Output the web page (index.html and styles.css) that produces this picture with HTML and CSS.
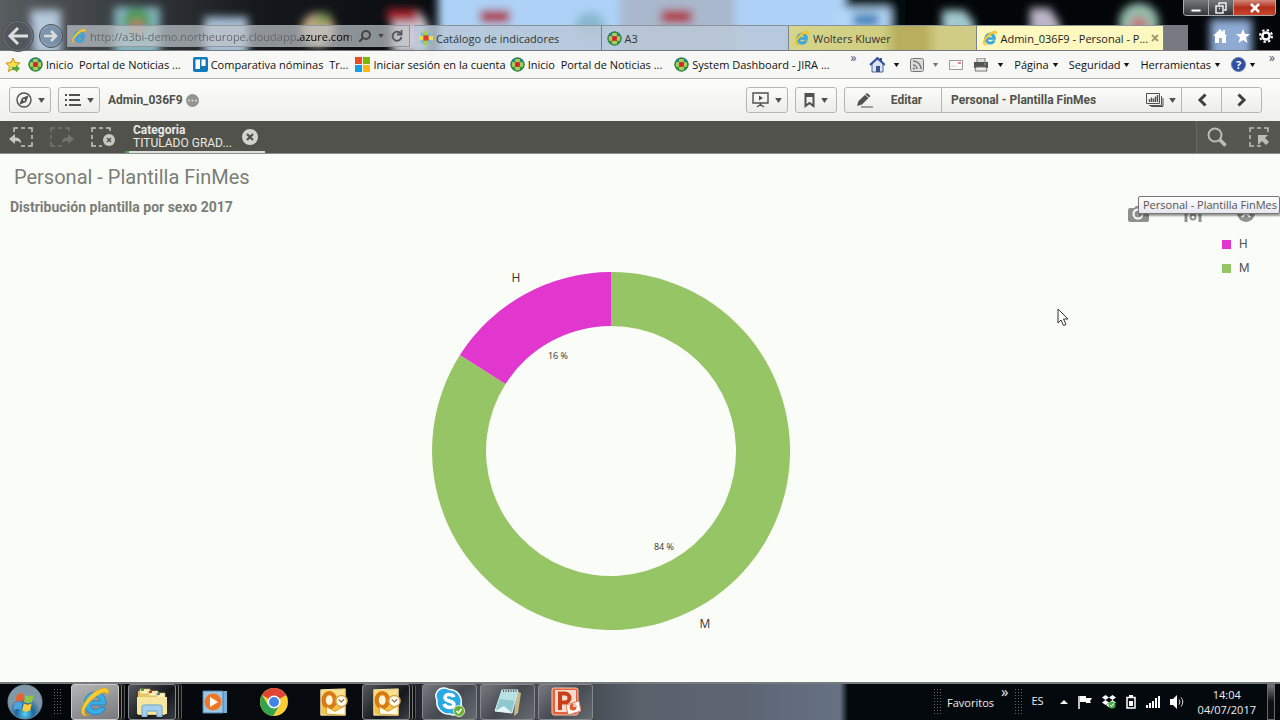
FILE: index.html
```html
<!DOCTYPE html>
<html lang="es">
<head>
  <meta charset="UTF-8" />
  <title>Admin_036F9 - Personal - Plantilla FinMes</title>
  <link rel="stylesheet" href="styles.css">
</head>
<body>

<svg class="sprite" aria-hidden="true">
  <symbol id="ie" viewBox="0 0 32 32">
    <path d="M27 19H11.500c.3 3 2.300 4.700 5 4.700 2 0 3.500-.9 4.300-2.400h5.600C25 26 21.400 28.500 16.500 28.500 10 28.500 5.500 24 5.500 17.200 5.500 10.500 10 6 16.400 6 23.500 6 27.500 11 27 19zM11.600 15H21c-.3-2.700-2-4.300-4.600-4.300-2.500 0-4.300 1.600-4.800 4.300z" fill="#39aee6" stroke="#1c7dbd" stroke-width=".8"/>
    <path d="M4 29C-1 25 7 11 17 5c6-3.600 12-4.500 12.500-.5.200 1.700-.4 3.500-1.300 5 .2-3.500-2.500-4-7-1.600C12 12.500 3 23.500 6 28c1 1.400 3 1 5 0-2.500 2-5.500 2.300-7 1z" fill="#f7cb2d" stroke="#d19a12" stroke-width=".5"/>
  </symbol>
  <symbol id="portal" viewBox="0 0 16 16">
    <circle cx="8" cy="8" r="7.500" fill="#3c9b3c"/>
    <circle cx="8" cy="8" r="7" fill="none" stroke="#2b6f52"/>
    <path d="M5.500 2h5v3.500H14v5h-3.500V14h-5v-3.500H2v-5h3.500z" fill="#a5d05a"/>
    <path d="M2.500 3 5 1.300v3.500H1.500zM11 1.300 13.500 3l1 1.800H11z" fill="#2b77a0"/>
    <rect x="5.500" y="5.500" width="5" height="5" fill="#d4232d"/>
  </symbol>
  <symbol id="catalog" viewBox="0 0 16 16">
    <path d="M5.500 0h5v16h-5z" fill="#a6cf4c"/>
    <path d="M0 5.500h16v5H0z" fill="#e6dd5c"/>
    <path d="M2 2h3.500v3.500H2zM10.500 2H14v3.500h-3.500zM2 10.500h3.500V14H2zM10.500 10.500H14V14h-3.500z" fill="#77b9d8"/>
    <rect x="5" y="5" width="6" height="6" fill="#dc3c2c"/>
  </symbol>
  <symbol id="caret" viewBox="0 0 8 6"><path d="M0 0h8L4 6z" fill="currentColor"/></symbol>
  <symbol id="outlook" viewBox="0 0 32 32">
    <path d="M3 3 29 2v28H3z" fill="#f3c24c" stroke="#fff0c0"/>
    <path d="M4 4 28 3v10L4 18z" fill="#fbe190"/>
    <ellipse cx="12" cy="14" rx="6" ry="7.500" fill="#fff6d8" stroke="#d97a12" stroke-width="4.500"/>
    <path d="M9 29V21l9 5 11-6v10z" fill="#fffbe8" stroke="#dba12c"/>
    <circle cx="25" cy="15" r="6" fill="#fffdf3" stroke="#d9a640" stroke-width="1.500"/>
    <path d="M22 13.500l3 2.500 3-3" fill="none" stroke="#8b6a2b" stroke-width="1.300"/>
  </symbol>
  <symbol id="close" viewBox="0 0 16 16">
    <circle cx="8" cy="8" r="8" fill="#d4d4cf"/>
    <path d="m5 5 6 6m0-6-6 6" stroke="#51524b" stroke-width="2.200"/>
  </symbol>
</svg>

<header class="browser">
  <svg class="wallpaper" viewBox="0 0 1280 50" preserveAspectRatio="none" aria-hidden="true">
    <defs>
      <filter id="soft" x="-10%" y="-60%" width="120%" height="220%"><feGaussianBlur stdDeviation="4"/></filter>
      <linearGradient id="night"><stop offset="0" stop-color="#585d60"/><stop offset=".2" stop-color="#15191d"/><stop offset=".4" stop-color="#030609"/></linearGradient>
    </defs>
    <rect width="1280" height="50" fill="url(#night)"/>
    <g filter="url(#soft)">
      <path d="M30 10h31v45H34z" fill="#b6c8dc"/>
      <rect x="114" y="7" width="46" height="50" fill="#84b6c0"/>
      <circle cx="137" cy="22" r="14" fill="#489b56"/>
      <circle cx="137" cy="27" r="7" fill="#c67870"/>
      <rect x="204" y="17" width="44" height="40" fill="#a9bfd6"/>
      <circle cx="318" cy="30" r="17" fill="#c4a983"/>
      <path d="m312 22 18-12-4 14z" fill="#4e9b3d"/>
      <path d="M392 12h28l8 12v30h-36z" fill="#cfc9d4"/>
      <rect x="387" y="9" width="31" height="13" fill="#a9202f"/>
      <rect x="438" y="-10" width="407" height="70" fill="#aed2f7"/>
      <rect x="620" y="-10" width="115" height="70" fill="#a9b8cc"/>
      <ellipse cx="590" cy="26" rx="15" ry="14" fill="#88b8cf"/>
      <rect x="480" y="10" width="30" height="13" fill="#ad303d"/>
      <rect x="661" y="10" width="31" height="13" fill="#ad303d"/>
      <path d="M845-8h60v70h-60z" fill="#05090d"/>
      <rect x="838" y="8" width="52" height="50" fill="#b4d8f8"/>
      <rect x="853" y="14" width="26" height="12" fill="#347db6"/>
      <path d="M942 10h22l10 12v34h-32z" fill="#a2c9cf"/>
      <path d="M1030 8h20l10 16v30h-30z" fill="#bbb5c7"/>
      <circle cx="1139" cy="23" r="20" fill="#94bdac"/>
      <circle cx="1139" cy="25" r="8" fill="#c76e73"/>
      <rect x="1210" y="19" width="42" height="40" fill="#8fabd4"/>
    </g>
  </svg>

  <div class="window-controls">
    <button aria-label="Minimizar"><svg width="12" height="10"><path d="M1 6h10v3H1z" fill="#fff" stroke="#555"/></svg></button>
    <button aria-label="Restaurar"><svg width="12" height="12" fill="none" stroke="#eee" stroke-width="1.500"><path d="M4 3V1h7v7H9"/><path d="M1 4h7v7H1z"/><path d="M4 6.500h1"/></svg></button>
    <button class="quit" aria-label="Cerrar"><svg width="12" height="10"><path d="m2 1 8 8m0-8L2 9" stroke="#fff" stroke-width="2.500"/></svg></button>
  </div>

  <div class="nav-row">
    <button class="nav-back" aria-label="Atrás"><svg width="22" height="20" fill="none" stroke="#ddd" stroke-width="3"><path d="M21 10H3m8-8-8 8 8 8"/></svg></button>
    <button class="nav-forward" aria-label="Adelante"><svg width="14" height="14" fill="none" stroke="#ddd" stroke-width="2.500"><path d="M0 7h12M7 2l5 5-5 5"/></svg></button>
    <div class="address">
      <svg width="16" height="16"><use href="#ie"/></svg>
      <input type="text" aria-label="Dirección" value="http://a3bi-demo.northeurope.cloudapp.azure.com/sense">
      <button aria-label="Buscar"><svg width="12" height="12" fill="none" stroke="#444" stroke-width="2"><circle cx="7" cy="5" r="4"/><path d="m4 8-4 4"/></svg></button>
      <button aria-label="Historial"><svg width="6" height="4" color="#444"><use href="#caret"/></svg></button>
      <button aria-label="Actualizar"><svg width="12" height="12" fill="none" stroke="#555" stroke-width="1.800"><path d="M10 4a4.500 4.500 0 1 0 .5 3"/><path d="M10.500 0v4.500H6"/></svg></button>
    </div>
    <nav class="tabs">
      <a class="tab" href="#"><svg width="14" height="14"><use href="#catalog"/></svg><span>Catálogo de indicadores</span></a>
      <a class="tab" href="#"><svg width="15" height="15"><use href="#portal"/></svg><span>A3</span></a>
      <a class="tab yellow" href="#"><svg width="16" height="16"><use href="#ie"/></svg><span>Wolters Kluwer</span></a>
      <a class="tab active" href="#"><svg width="16" height="16"><use href="#ie"/></svg><span>Admin_036F9 - Personal - P...</span><svg class="tab-close" width="8" height="8"><path d="m1 1 6 6m0-6L1 7" stroke="#a29b72" stroke-width="2"/></svg></a>
      <button class="new-tab" aria-label="Nueva pestaña"></button>
    </nav>
    <div class="browser-tools">
      <button aria-label="Inicio"><svg width="14" height="14"><path d="M7 0 0 7h2v7h4V9h3v5h4V7h1l-2-2V1h-2v2z" fill="#fff"/></svg></button>
      <button aria-label="Favoritos"><svg width="14" height="14"><path d="m7 0 2 5h5l-4 3.500L11.500 14 7 11l-4.500 3L4 8.500 0 5h5z" fill="#fff"/></svg></button>
      <button aria-label="Opciones"><svg width="14" height="14" fill="none" stroke="#fff"><circle cx="7" cy="7" r="3.600" stroke-width="2.500"/><circle cx="7" cy="7" r="6" stroke-width="2" stroke-dasharray="2.400 2.310"/></svg></button>
    </div>
  </div>
</header>

<div class="favorites">
  <nav class="fav-links">
    <a href="#" aria-label="Agregar a favoritos"><svg width="16" height="16"><path d="m8 1 2 4.500 5 .5-4 3.500 1 5-4-2.500-4.500 2.500 1-5L1 6l5-.5z" fill="#fbdc4c" stroke="#c89512"/><path d="M7 10h4V8l4 3.500-4 3.500v-2H7z" fill="#53a83c"/></svg></a>
    <a class="near" href="#"><svg width="15" height="15"><use href="#portal"/></svg>Inicio&nbsp; Portal de Noticias ...</a>
    <a class="apart" href="#"><svg width="15" height="15"><rect width="15" height="15" rx="2" fill="#1379bd"/><path d="M2.500 2.500H7V12H2.500zM8.500 2.500h4V9h-4z" fill="#fff"/></svg>Comparativa nóminas&nbsp; Tr...</a>
    <a class="near" href="#"><svg width="15" height="15"><path d="M0 0h7v7H0z" fill="#ef4a24"/><path d="M8 0h7v7H8z" fill="#7db700"/><path d="M0 8h7v7H0z" fill="#149fe3"/><path d="M8 8h7v7H8z" fill="#fab813"/></svg>Iniciar sesión en la cuenta</a>
    <a href="#"><svg width="15" height="15"><use href="#portal"/></svg>Inicio&nbsp; Portal de Noticias ...</a>
    <a class="apart" href="#"><svg width="15" height="15"><use href="#portal"/></svg>System Dashboard - JIRA ...</a>
  </nav>
  <span class="more">»</span>
  <div class="commands">
    <button class="pic" aria-label="Página principal"><svg width="16" height="16"><path d="M3 7v8h11V7L8.500 2z" fill="#dce3f3" stroke="#5265a0"/><path d="m1 8 7.500-7L16 8M12 1v4" fill="none" stroke="#354d98" stroke-width="2"/><path d="M7 9h4v6H7z" fill="#3e548f"/></svg><svg width="7" height="4"><use href="#caret"/></svg></button>
    <button class="pic muted" aria-label="Fuentes"><svg width="14" height="14" fill="none" stroke="#777"><rect x=".5" y=".5" width="13" height="13" rx="2" fill="#ddd"/><path d="M3 3a8 8 0 0 1 8 8M3 7a4 4 0 0 1 4 4" stroke-width="1.500"/><circle cx="4" cy="10.500" r=".8"/></svg><svg width="7" height="4"><use href="#caret"/></svg></button>
    <button aria-label="Leer correo"><svg width="14" height="10"><path d="M.5.5h13v9H.5z" fill="#fafafa" stroke="#999"/><path d="M9 2h3v2H9z" fill="#d88"/><path d="M2 6h5" stroke="#ccc"/></svg></button>
    <button class="pic" aria-label="Imprimir"><svg width="16" height="14"><path d="M4 0h8v5H4z" fill="#ddd" stroke="#777"/><path d="M1 4h14v6H1z" fill="#555"/><path d="M3 9h10l1 4H2z" fill="#eee" stroke="#777"/><path d="M11 6h2" stroke="#8d8"/></svg><svg width="7" height="4"><use href="#caret"/></svg></button>
    <button>Página<svg width="7" height="4"><use href="#caret"/></svg></button>
    <button>Seguridad<svg width="7" height="4"><use href="#caret"/></svg></button>
    <button>Herramientas<svg width="7" height="4"><use href="#caret"/></svg></button>
    <button class="help" aria-label="Ayuda"><b>?</b><svg width="7" height="4"><use href="#caret"/></svg></button>
  </div>
  <span class="more">»</span>
</div>

<div class="app-bar">
  <button class="btn" aria-label="Navegación"><svg width="16" height="16" fill="none" stroke="#51524b" stroke-width="1.400"><circle cx="8" cy="8" r="7"/><path d="m11.500 4.500-2 5-5 2 2-5z" fill="#51524b"/><circle cx="8" cy="8" r="1" fill="#fff" stroke="none"/></svg><svg width="7" height="5"><use href="#caret"/></svg></button>
  <button class="btn" aria-label="Menú"><svg width="16" height="12" stroke="#51524b" stroke-width="2"><path d="M0 1h2M4 1h11M0 6h2M4 6h11M0 11h2M4 11h12"/></svg><svg width="7" height="5"><use href="#caret"/></svg></button>
  <span class="app-name">Admin_036F9</span>
  <svg width="13" height="13"><circle cx="6.500" cy="6.500" r="6.500" fill="#93938f"/><path d="M2 6.500h9" stroke="#ddd" stroke-width="1.500" stroke-dasharray="2 1.500"/></svg>
  <div class="app-actions">
    <button class="btn" aria-label="Historias"><svg width="17" height="16" fill="none" stroke="#51524b" stroke-width="1.400"><path d="M1 1h15v10H1zM8.500 11v3M5 15l3.500-2.500L12 15"/><path d="m7 3.500 4 2.500-4 2.500z" fill="#51524b" stroke="none"/></svg><svg width="7" height="5"><use href="#caret"/></svg></button>
    <button class="btn" aria-label="Marcadores"><svg width="11" height="15"><path d="M1.500 1h8v12l-4-3-4 3z" fill="none" stroke="#51524b" stroke-width="2"/><path d="M1 0h9v4H1z" fill="#51524b"/></svg><svg width="7" height="5"><use href="#caret"/></svg></button>
    <div class="sheet-group">
      <button class="edit"><svg width="17" height="16"><path d="m1 14 1.500-5L11 1l3.500 3L6 12.500z" fill="#51524b"/><path d="M9 2.500 13 6" stroke="#f5f6f2"/><path d="M5 15h12" stroke="#51524b"/></svg>Editar</button>
      <button class="sheet-name">Personal - Plantilla FinMes<svg width="18" height="14" fill="none" stroke="#51524b"><path d="M.5.500h13v10H.5z"/><path d="M3 12.500h12.500V3M5 13.500h12V5"/><path d="M3.500 9V6M5.500 9V4.500M7.500 9V5.500M9.500 9V3.500M11.500 9V2" stroke-width="1.400"/></svg><svg width="7" height="5"><use href="#caret"/></svg></button>
      <button class="arrow" aria-label="Hoja anterior"><svg width="10" height="14" fill="none" stroke="#40413b" stroke-width="3"><path d="M8.500 1.500 3 7l5.500 5.500"/></svg></button>
      <button class="arrow" aria-label="Hoja siguiente"><svg width="10" height="14" fill="none" stroke="#40413b" stroke-width="3"><path d="M1.500 1.500 7 7l-5.500 5.500"/></svg></button>
    </div>
  </div>
</div>

<div class="selections">
  <div class="selection-tools">
    <button aria-label="Paso atrás"><svg width="24" height="20" fill="none" stroke="#c8c8c3" stroke-width="1.500"><path d="M5 5V1h4M12 1h4M19 1h4v4M23 8v4M23 15v4h-4M16 19h-4"/><path d="m0 12 6-5v3.500c4 0 6 2 6 6-1.500-2-3-2.500-6-2.500V17z" fill="#c8c8c3" stroke="none"/></svg></button>
    <button class="dim" aria-label="Paso adelante"><svg width="24" height="20" fill="none" stroke="#c8c8c3" stroke-width="1.500"><path d="M1 5V1h4M8 1h4M15 1h4v3M1 8v4M1 15v4h4M8 19h4"/><path d="m24 12-6-5v3.500c-4 0-6 2-6 6 1.500-2 3-2.500 6-2.500V17z" fill="#c8c8c3" stroke="none"/></svg></button>
    <button aria-label="Borrar selecciones"><svg width="24" height="20" fill="none" stroke="#c8c8c3" stroke-width="1.500"><path d="M1 5V1h4M8 1h4M15 1h4v3M1 8v4M1 15v4h4M8 19h3"/><circle cx="18" cy="13" r="6" fill="#c8c8c3" stroke="none"/><path d="m16 11 4 4m0-4-4 4" stroke="#51524b"/></svg></button>
  </div>
  <div class="selection">
    <div class="selection-text"><b>Categoria</b><span>TITULADO GRAD...</span></div>
    <button aria-label="Borrar Categoria"><svg width="16" height="16"><use href="#close"/></svg></button>
  </div>
  <div class="selection-search">
    <button aria-label="Buscar"><svg width="20" height="20" fill="none" stroke="#bdbdb8"><circle cx="8" cy="8" r="6.500" stroke-width="2"/><path d="m12.500 12.500 6 6" stroke-width="3.500"/></svg></button>
    <button aria-label="Herramienta de selecciones"><svg width="20" height="20" fill="none" stroke="#bdbdb8" stroke-width="1.500"><path d="M1 5V1h4M8 1h4M15 1h4v4M1 8v4M1 15v4h4M8 19h4"/><path d="M9 8h10l-3 3 4 4-3 3-4-4-4 4z" fill="#bdbdb8" stroke="none"/></svg></button>
  </div>
</div>

<main>
  <h1>Personal - Plantilla FinMes</h1>
  <h2>Distribución plantilla por sexo 2017</h2>

  <div class="object-tools">
    <button aria-label="Instantánea"><svg width="22" height="16"><path d="M3 2h4l2-2h6l2 2h3q2 0 2 2v10q0 2-2 2H3q-2 0-2-2V4q0-2 2-2z" fill="#8f908b"/><circle cx="11" cy="8" r="4.500" fill="none" stroke="#fff" stroke-width="2"/></svg></button>
    <button aria-label="Exploración"><svg width="18" height="18" fill="none" stroke="#8f908b" stroke-width="3"><path d="M2 0v18M16 0v18"/><path d="M9 0v8" stroke-width="2"/><circle cx="9" cy="13" r="2.500" stroke-width="2"/></svg></button>
    <button aria-label="Pantalla completa"><svg width="18" height="18"><circle cx="9" cy="9" r="9" fill="#8f908b"/><path d="m5 5 8 8m0-8-8 8" stroke="#fff" stroke-width="2"/></svg></button>
  </div>
  <div class="tooltip" role="tooltip">Personal - Plantilla FinMes</div>

  <div class="chart">
    <svg class="donut" viewBox="0 0 400 392" role="img" aria-label="H 16 %, M 84 %">
      <path d="M200 15A179 179 0 1 1 48.900 98.100L94.500 127A125 125 0 1 0 200 69z" fill="#96c566"/>
      <path d="M48.900 98.100A179 179 0 0 1 200 15v54a125 125 0 0 0-105.500 58z" fill="#e137cf"/>
      <text x="105" y="25">H</text>
      <text x="294" y="371">M</text>
      <text class="share" x="147" y="102">16 %</text>
      <text class="share" x="253" y="293">84 %</text>
    </svg>
    <ul class="legend">
      <li><i class="key-h"></i>H</li>
      <li><i class="key-m"></i>M</li>
    </ul>
  </div>

  <svg class="pointer" width="12" height="19" aria-hidden="true"><path d="M1 1v14l3-3 2.500 5.500 2.500-1L6.500 11H11z" fill="#fff" stroke="#333"/></svg>
</main>

<footer class="taskbar">
  <button class="start" aria-label="Inicio">
    <svg width="36" height="36" viewBox="0 0 36 36">
      <defs><radialGradient id="orb" cx=".5" cy=".85"><stop offset="0" stop-color="#5bd3f5"/><stop offset=".5" stop-color="#1c679f"/><stop offset="1" stop-color="#8097a8"/></radialGradient></defs>
      <circle cx="18" cy="18" r="17" fill="url(#orb)" stroke="#7693a5"/>
      <path d="M10 11c3-2 5-2 7-.5l-1.500 7C13 16 11 16 8.500 17.500z" fill="#ee6128"/>
      <path d="M18.500 11c3 1.500 5 1.500 8 0L25 18c-3 1.500-5 1.500-8 0z" fill="#8fc83e"/>
      <path d="M8 19c3-1.500 5-1.500 7.500 0L14 26c-2.500-1.500-4.500-1.500-7.500 0z" fill="#4ba4e3"/>
      <path d="M16.700 19.500c3 1.500 5 1.500 8 0l-1.500 7c-3 1.500-5 1.500-8 0z" fill="#fccb37"/>
    </svg>
  </button>
  <span class="grip"></span>
  <button class="task stacked lit" aria-label="Internet Explorer"><svg width="32" height="32"><use href="#ie"/></svg></button>
  <button class="task stacked" aria-label="Explorador de archivos">
    <svg width="32" height="30" viewBox="0 0 32 30"><path d="M2 4h9l2 3h16v21H2z" fill="#e9c863"/><path d="M4 2h10v5H4zM12 4h10v5H12zM20 6h9v5h-9z" fill="#faf0bd" stroke="#d5b455" stroke-width=".6"/><path d="M5 2h3v2H5z" fill="#3fa648"/><path d="M13 4h3v2h-3z" fill="#cb3c33"/><path d="M21 6h3v2h-3z" fill="#3b86c9"/><path d="M1 10h30v17H1z" fill="#f8e5a0"/><path d="M6 30V20q0-2 2-2h16q2 0 2 2v10h-5v-6h-10v6z" fill="#a4d1ee" stroke="#6aa5cf"/></svg>
  </button>
  <button class="task plain" aria-label="Reproductor multimedia">
    <svg width="26" height="26"><path d="M5 2h20v22H5z" fill="#77aed6"/><path d="M1 2h20v22H1z" fill="#9ec7e4" stroke="#4d81ad"/><circle cx="11" cy="13" r="8.500" fill="#ef7625"/><path d="m8 8 8 5-8 5z" fill="#fff"/></svg>
  </button>
  <button class="task plain" aria-label="Chrome">
    <svg width="28" height="28" viewBox="0 0 28 28"><circle cx="14" cy="14" r="14" fill="#f9cd35"/><path d="M14 14 2 7a14 14 0 0 1 24.200 0z" fill="#e04535"/><path d="M2 7a14 14 0 0 0 11 21l6-10-5 2-6-3z" fill="#32a350"/><circle cx="14" cy="14" r="6.500" fill="#fff"/><circle cx="14" cy="14" r="5" fill="#4384e8"/></svg>
  </button>
  <button class="task plain" aria-label="Outlook"><svg width="30" height="30"><use href="#outlook"/></svg></button>
  <button class="task stacked" aria-label="Outlook, ventanas abiertas"><svg width="30" height="30"><use href="#outlook"/></svg></button>
  <button class="task open" aria-label="Skype Empresarial">
    <svg width="30" height="30" viewBox="0 0 30 30"><path d="M9 1a8 8 0 0 1 5 1.500A12 12 0 0 1 26 17a8 8 0 0 1-11 10A12 12 0 0 1 2 13 8 8 0 0 1 9 1z" fill="#28a9e5" stroke="#fff" stroke-width="1.500"/><path d="M19 10c-1-3-9-4-9 .5 0 5 9 2.500 9 7 0 4-8 4-10-.5" fill="none" stroke="#fff" stroke-width="3.500"/><circle cx="24" cy="24" r="5.500" fill="#6aae2e" stroke="#dfead4"/><path d="m21.500 24 2 2 3-4" fill="none" stroke="#fff" stroke-width="1.500"/></svg>
  </button>
  <button class="task open" aria-label="Bloc de notas">
    <svg width="30" height="28"><path d="m23 3 5 2-3 20-4 3z" fill="#c9b98a"/><path d="M9 2h16l-6 23-17-2z" fill="#8fc8cf" stroke="#dff2f4"/><path d="M9 2h16l-3 11-15-2z" fill="#b9e0e4"/><path d="M10 3h15" stroke="#555" stroke-width="2" stroke-dasharray="1 1.500"/><path d="m2 23 9-5 8 7z" fill="#e4f4f5"/></svg>
  </button>
  <button class="task open" aria-label="PowerPoint">
    <svg width="30" height="30"><rect x="1" y="1" width="26" height="27" rx="2" fill="#e4613a" stroke="#f7c8b4"/><path d="M4 3h21v22H4z" fill="#f8dccf"/><path d="M9 23V6.500h5a4.500 4.500 0 0 1 0 9H9" fill="none" stroke="#c93f1c" stroke-width="4"/><path d="m15 18 13-4 2 10-13 4z" fill="#fff" stroke="#df7a5b"/><circle cx="22" cy="20" r="3.500" fill="#e05a33"/><path d="M22 20v-4a4 4 0 0 1 4 4z" fill="#f8c1a9"/></svg>
  </button>

  <div class="tray">
    <span class="grip"></span>
    <span class="tray-label">Favoritos</span>
    <span class="tray-more">»</span>
    <span class="grip"></span>
    <span class="tray-lang">ES</span>
    <div class="tray-icons">
      <button aria-label="Mostrar iconos ocultos"><svg width="8" height="4"><path d="M0 4h8L4 0z" fill="#fff"/></svg></button>
      <button aria-label="Centro de actividades"><svg width="14" height="14"><path d="M1 1v13" stroke="#fff" stroke-width="1.500"/><path d="M2 1h6v2h6l-2 3 1 2H8V7H2z" fill="#fff"/></svg></button>
      <button aria-label="Dropbox"><svg width="14" height="14"><path d="m3.500 0 3.500 2.500L3.500 5 0 2.500zM10.500 0 14 2.500 10.500 5 7 2.500zM3.500 5 7 7.500 3.500 10 0 7.500zM10.500 5 14 7.500 10.500 10 7 7.500zM7 8l3 2-3 2.500L4 10z" fill="#fff"/><circle cx="10" cy="10" r="3.500" fill="#48ae4a"/><path d="m8.500 10 1 1.500 2-3" stroke="#fff" fill="none"/></svg></button>
      <button aria-label="Batería"><svg width="10" height="14"><path d="M1 2.500h8V13H1z" fill="none" stroke="#fff" stroke-width="1.500"/><path d="M3 0h4v2H3zM3 6h4v5H3z" fill="#fff"/></svg></button>
      <button aria-label="Red"><svg width="14" height="12"><path d="M0 9h2v3H0zM3 7h2v5H3zM6 5h2v7H6zM9 2h2v10H9zM12 0h2v12h-2z" fill="#fff"/></svg></button>
      <button aria-label="Volumen"><svg width="14" height="14" fill="none" stroke="#ddd"><path d="M0 4h3l4-4v14l-4-4H0z" fill="#fff" stroke="none"/><path d="M9 4.500a4 4 0 0 1 0 5M11 2.500a6.500 6.500 0 0 1 0 9"/></svg></button>
    </div>
    <time class="clock">14:04<br>04/07/2017</time>
    <button class="peek" aria-label="Mostrar escritorio"></button>
  </div>
</footer>

</body>
</html>
```
FILE: styles.css
```css
* {
  box-sizing: border-box;
}

body {
  margin: 0;
  min-height: 100vh;
  display: flex;
  flex-direction: column;
  overflow-x: hidden;
  font-family: "Open Sans", "Noto Sans", sans-serif;
  font-size: 11px;
  color: #111;
  background: #fafcf7;
}

button {
  display: flex;
  align-items: center;
  justify-content: center;
  padding: 0;
  border: none;
  background: none;
  font: inherit;
  color: inherit;
  cursor: pointer;
}

a {
  color: inherit;
  text-decoration: none;
}

svg {
  flex: none;
}

.sprite {
  position: absolute;
  width: 0;
  height: 0;
}

/* ventana del navegador */
.browser {
  position: relative;
  padding-top: 20px;
  border-bottom: 1px solid #777b80;
}

.wallpaper {
  position: absolute;
  top: 0;
  left: 0;
  width: 100%;
  height: 100%;
}

.window-controls {
  position: absolute;
  top: 0;
  right: 4px;
  display: flex;
  border: 1px solid #aaa;
  border-top: none;
  border-radius: 0 0 4px 4px;
  overflow: hidden;
}

.window-controls button {
  width: 25px;
  height: 15px;
  background: linear-gradient(#777, #33373b);
  border-right: 1px solid #aaa;
}

.window-controls .quit {
  width: 41px;
  border: none;
  background: linear-gradient(#d58a7c, #b22e1b 50%, #c9452c);
}

.nav-row {
  position: relative;
  display: flex;
  align-items: center;
  height: 30px;
  padding: 2px 0 0 2px;
}

.nav-back,
.nav-forward {
  border: 1px solid #4a4f55;
  border-radius: 50%;
  background: rgba(80, 85, 92, 0.7);
  box-shadow: inset 0 0 0 1px rgba(255, 255, 255, 0.2);
}

.nav-back {
  width: 32px;
  height: 32px;
}

.nav-forward {
  width: 24px;
  height: 24px;
  margin: 0 4px 0 5px;
  background: rgba(100, 125, 155, 0.7);
}

.address {
  display: flex;
  align-items: center;
  gap: 7px;
  width: 343px;
  height: 22px;
  padding: 0 6px 0 3px;
  border: 1px solid #8f969d;
  background: rgba(190, 195, 200, 0.72);
}

.address input {
  flex: 1;
  min-width: 0;
  margin-left: -4px;
  padding: 0;
  border: none;
  outline: none;
  font: inherit;
  color: transparent;
  /* el dominio va más oscuro que el resto de la dirección */
  background: linear-gradient(90deg, #62666a 207px, #000 207px, #000 259px, #62666a 259px);
  background-clip: text;
  -webkit-background-clip: text;
}

.tabs {
  flex: 1;
  display: flex;
  align-self: flex-end;
  height: 25px;
  margin-left: 4px;
}

.tab {
  flex: 1;
  min-width: 0;
  display: flex;
  align-items: center;
  gap: 3px;
  padding: 0 5px;
  border-right: 1px solid #7a838c;
  border-top: 1px solid #8a939c;
  color: #333;
  background: rgba(186, 200, 215, 0.82);
  white-space: nowrap;
}

.tab.yellow {
  background: linear-gradient(90deg, #d6d58b, #cfcd80 50%, #b8ae5e 58%, #b8ae5e 72%, #d0cc86 80%);
}

.tab.active {
  color: #222;
  background: #fcf8bf;
}

.tab-close {
  margin-left: auto;
}

.new-tab {
  width: 24px;
  background: #777a80;
}

.browser-tools {
  display: flex;
  gap: 9px;
  padding: 0 7px 0 25px;
}

/* barra de favoritos */
.favorites {
  display: flex;
  align-items: center;
  height: 28px;
  padding: 0 5px;
  border-bottom: 1px solid #b2b4b0;
  background: #f7f8f5;
  white-space: nowrap;
}

.fav-links,
.fav-links a,
.commands {
  display: flex;
  align-items: center;
}

.fav-links {
  flex: 1;
  gap: 4px;
}

.fav-links a {
  gap: 3px;
}

.fav-links .near {
  margin-left: 3px;
}

.fav-links .apart {
  margin-left: 8px;
}

.more {
  align-self: flex-start;
  font-size: 12px;
  line-height: 14px;
  color: #444b70;
}

.commands {
  gap: 10px;
  padding: 0 13px;
}

.commands button {
  gap: 3px;
}

.commands .pic {
  gap: 8px;
}

.commands .muted {
  color: #777;
}

.help b {
  width: 15px;
  height: 15px;
  border: 1px solid #6c7ca8;
  border-radius: 50%;
  line-height: 13px;
  color: #fff;
  background: #2c4fa5;
}

/* barra de la aplicación */
.app-bar {
  display: flex;
  align-items: center;
  gap: 7px;
  height: 42px;
  padding: 0 18px 0 9px;
  font-family: Roboto, sans-serif;
  font-size: 12px;
  font-weight: bold;
  color: #51524b;
  background: linear-gradient(#fcfdfa, #eff0ec);
}

.btn,
.sheet-group {
  height: 26px;
  border: 1px solid #b6b7b2;
  border-radius: 3px;
  background: linear-gradient(#fcfdfa, #ecede9);
}

.btn {
  gap: 6px;
  width: 42px;
}

.app-name {
  margin: 0 -4px 0 1px;
}

.app-actions {
  display: flex;
  gap: 7px;
  margin-left: auto;
}

.sheet-group {
  display: flex;
}

.sheet-group button + button {
  border-left: 1px solid #b6b7b2;
}

.sheet-group .edit {
  gap: 18px;
  width: 96px;
  padding-right: 8px;
}

.sheet-group .sheet-name {
  gap: 5px;
  width: 240px;
  padding: 0 5px 0 9px;
}

.sheet-name svg:first-of-type {
  margin-left: auto;
}

.sheet-group .arrow {
  width: 40px;
}

/* selecciones */
.selections {
  display: flex;
  height: 33px;
  font-family: Roboto, sans-serif;
  font-size: 12px;
  color: #e8e8e4;
  background: #51524b;
  border-bottom: 1px solid #8d8e89;
}

.selection-tools {
  display: flex;
  gap: 17px;
  padding: 0 10px 0 9px;
}

.selection-tools .dim {
  opacity: 0.3;
}

.selection {
  display: flex;
  align-items: center;
  gap: 6px;
  width: 140px;
  padding: 2px 7px 0 8px;
  border-bottom: 2px solid;
  border-image: linear-gradient(90deg, #3fae49 4px, #deded9 4px) 0 0 2 0;
}

.selection-text {
  flex: 1;
  display: flex;
  flex-direction: column;
  line-height: 13px;
  white-space: nowrap;
}

.selection-search {
  display: flex;
  gap: 22px;
  margin-left: auto;
  padding: 0 11px 0 10px;
  border-left: 1px solid #65665f;
  background: #565750;
}

/* hoja */
main {
  flex: 1;
  position: relative;
  display: flex;
  flex-direction: column;
  font-family: Roboto, sans-serif;
  color: #7b7d77;
}

h1 {
  margin: 11px 14px 0;
  font-size: 20px;
  line-height: 24px;
  font-weight: normal;
}

h2 {
  margin: 9px 10px 0;
  font-size: 14px;
  line-height: 18px;
}

.object-tools {
  position: absolute;
  top: 50px;
  right: 25px;
  display: flex;
  align-items: flex-end;
  gap: 35px;
}

.tooltip {
  position: absolute;
  top: 42px;
  right: 0;
  width: 142px;
  padding: 0 4px;
  border: 1px solid #767676;
  border-radius: 2px;
  font-family: "Open Sans", sans-serif;
  font-size: 11px;
  line-height: 16px;
  color: #555;
  white-space: nowrap;
  background: linear-gradient(#fff, #e6e7ef);
  box-shadow: 1px 2px 2px rgba(0, 0, 0, 0.4);
}

.chart {
  flex: 1;
  display: flex;
  align-items: flex-start;
}

.donut {
  flex: 1;
  min-width: 0;
  height: 392px;
  margin-top: 41px;
  font-family: "Open Sans", sans-serif;
  font-size: 12px;
  text-anchor: middle;
  fill: #333;
}

.donut .share {
  font-size: 9px;
}

.legend {
  width: 58px;
  margin: 16px 0 0;
  padding: 0;
  list-style: none;
  font-size: 12px;
  line-height: 24px;
  color: #555;
}

.legend li {
  display: flex;
  align-items: center;
  gap: 8px;
}

.legend i {
  width: 9px;
  height: 9px;
}

.key-h {
  background: #e137cf;
}

.key-m {
  background: #96c566;
}

.pointer {
  position: absolute;
  top: 154px;
  right: 211px;
}

/* barra de tareas */
.taskbar {
  display: flex;
  align-items: center;
  height: 38px;
  padding: 0 5px 0 7px;
  border-top: 2px solid #777b7e;
  color: #eee;
  background: linear-gradient(90deg, #03070b 0, #070b10 390px, #41464e 450px, #484d54 590px, #59616b 640px, #5d6573 740px, #667184 840px, #04090d 848px);
}

.grip {
  width: 9px;
  height: 28px;
  background: radial-gradient(circle, #666 1px, transparent 1px) 0 0 / 3px 3px;
}

.start + .grip {
  margin: 0 9px 0 10px;
}

.task {
  position: relative;
  width: 48px;
  height: 36px;
  border: 1px solid #85898d;
  border-radius: 3px;
  background: linear-gradient(135deg, #55595e, #14181c 60%, #3a3f44);
}

.task.lit {
  background: linear-gradient(160deg, #b5b5b7, #77797c);
  border-color: #ccc;
}

.task.stacked {
  margin-right: 9px;
  box-shadow: 2px 0 0 #111, 3px 0 0 #777, 5px 0 0 #111, 6px 0 0 #555;
}

.task.plain {
  width: 59px;
  border: none;
  background: none;
}

.task.open {
  width: 55px;
  margin-left: 3px;
  background: linear-gradient(135deg, #777b80, #454a50 50%, #666b72);
}

.tray {
  display: flex;
  align-items: center;
  align-self: stretch;
  margin-left: auto;
  white-space: nowrap;
}

.tray-label {
  margin: 0 7px 0 5px;
}

.tray-more {
  align-self: flex-start;
  margin-right: 6px;
  font-size: 15px;
  line-height: 14px;
}

.tray-lang {
  margin: 0 16px 4px 8px;
}

.tray-icons {
  display: flex;
  gap: 10px;
}

.clock {
  margin: 0 11px 0 14px;
  font-size: 11px;
  line-height: 15px;
  text-align: center;
}

.peek {
  align-self: stretch;
  width: 8px;
  border: 1px solid #656a6e;
  background: linear-gradient(#777, #111 50%);
}
```
